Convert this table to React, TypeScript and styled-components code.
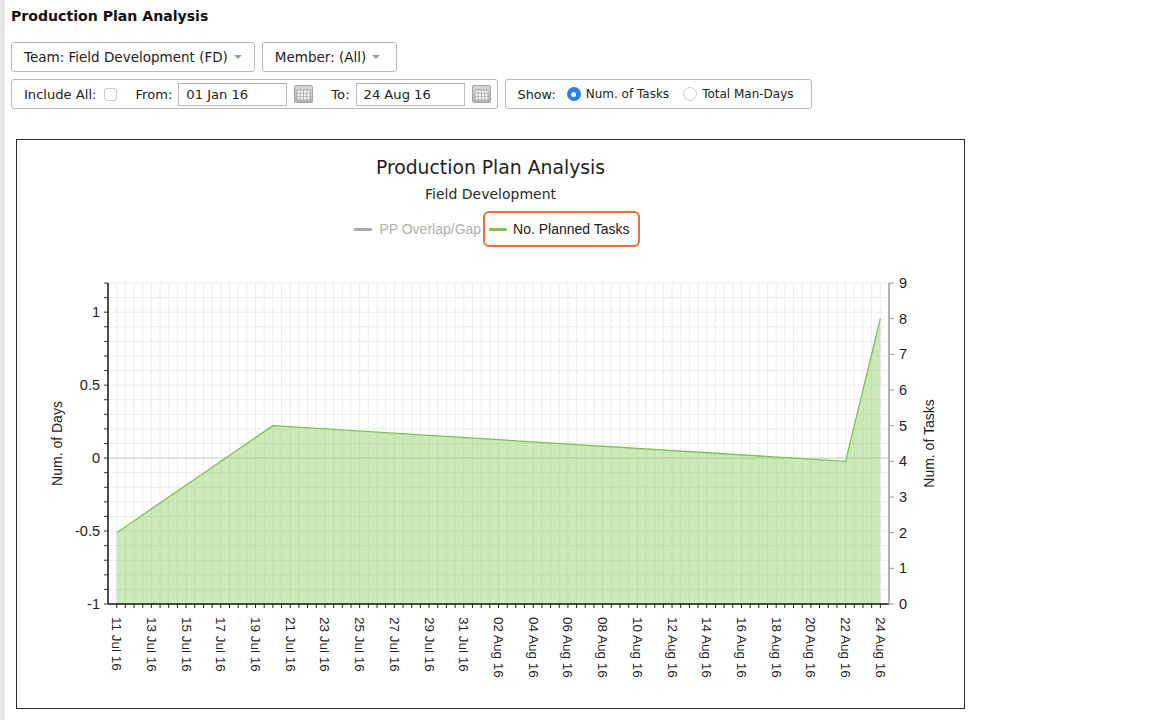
import React from "react";
import styled, { createGlobalStyle, css } from "styled-components";

const GlobalStyle = createGlobalStyle`
  html, body { margin: 0; padding: 0; background: #ffffff; }
  body { font-family: "DejaVu Sans", Verdana, sans-serif; color: #222; }
`;

const Page = styled.div`
  min-height: 720px;
  box-sizing: border-box;
  border-left: 5px solid #e6e6e6;
  padding: 7px 0 0 6px;
  display: flex;
  flex-direction: column;
  align-items: flex-start;
`;

const PageTitle = styled.h1`
  margin: 0;
  font: bold 14.1px/18px "DejaVu Sans", Verdana, sans-serif;
  color: #111;
`;

const Controls = styled.div`
  margin-top: 17px;
  display: flex;
  flex-direction: column;
  gap: 7px;
`;

const Row = styled.div`
  display: flex;
  gap: 7px;
`;

const Box = styled.div<{ $size: number; $padRight: number }>`
  display: flex;
  align-items: center;
  height: 30px;
  box-sizing: border-box;
  border: 1px solid #bababa;
  border-radius: 3px;
  padding: 0 ${(p) => p.$padRight}px 0 12px;
  font-size: ${(p) => p.$size}px;
  color: #222;
  background: #fff;
  white-space: nowrap;
`;

const Caret = styled.span`
  width: 0;
  height: 0;
  margin-left: 6px;
  border-left: 4px solid transparent;
  border-right: 4px solid transparent;
  border-top: 4px solid #9a9a9a;
`;

const FieldLabel = styled.span<{ $gap?: number }>`
  margin-left: ${(p) => p.$gap ?? 0}px;
`;

const Checkbox = styled.span`
  margin-left: 8px;
  width: 13px;
  height: 13px;
  box-sizing: border-box;
  border: 1px solid #c8c8c8;
  border-radius: 3px;
  background: #fff;
`;

const DateInput = styled.div`
  margin-left: 6px;
  width: 109px;
  height: 23px;
  box-sizing: border-box;
  border: 1px solid #bdbdbd;
  border-top-color: #a9a9a9;
  padding-left: 7px;
  display: flex;
  align-items: center;
  background: #fff;
  font-size: 13.1px;
`;

const CalendarButton = styled.span`
  margin-left: 7px;
  display: flex;
  width: 19px;
  height: 18px;
`;

const Radio = styled.span<{ $checked?: boolean; $gap: number }>`
  margin-left: ${(p) => p.$gap}px;
  width: 14px;
  height: 14px;
  box-sizing: border-box;
  border-radius: 50%;
  display: flex;
  align-items: center;
  justify-content: center;
  ${(p) =>
    p.$checked
      ? css`
          background: #2b7ff4;
          &::after {
            content: "";
            width: 5px;
            height: 5px;
            border-radius: 50%;
            background: #fff;
          }
        `
      : css`
          background: #fff;
          border: 1px solid #cbcbcb;
        `}
`;

const RadioLabel = styled.span`
  margin-left: 5px;
  font-size: 12px;
`;

const ChartFrame = styled.div`
  margin: 30px 0 0 5px;
  width: 949px;
  height: 570px;
  box-sizing: border-box;
  border: 1px solid #2b2b2b;
  display: flex;
  flex-direction: column;
  background: #fff;
`;

const ChartHeader = styled.div`
  height: 120px;
  box-sizing: border-box;
  padding-top: 16px;
  display: flex;
  flex-direction: column;
  align-items: center;
`;

const ChartTitle = styled.div`
  font: 18.8px/24px "DejaVu Sans", Verdana, sans-serif;
  color: #1e1e1e;
`;

const ChartSubtitle = styled.div`
  margin-top: 4px;
  font: 14px/20px "DejaVu Sans", Verdana, sans-serif;
  color: #2a2a2a;
`;

const Legend = styled.div`
  margin-top: 7px;
  height: 36px;
  display: flex;
  align-items: center;
  gap: 8px;
  padding-left: 3px;
`;

const LegendItem = styled.div<{ $muted?: boolean; $highlight?: boolean }>`
  position: relative;
  display: flex;
  align-items: center;
  gap: ${(p) => (p.$highlight ? 6 : 7)}px;
  font: 14px/16px "Liberation Sans", Arial, sans-serif;
  color: ${(p) => (p.$muted ? "#b0b0b0" : "#1a1a1a")};
  ${(p) =>
    p.$highlight &&
    css`
      &::after {
        content: "";
        position: absolute;
        left: -6px;
        right: -10px;
        top: -10px;
        bottom: -10px;
        border: 2px solid #e8703a;
        border-radius: 6px;
      }
    `}
`;

const Swatch = styled.span<{ $color: string }>`
  width: 18px;
  height: 3px;
  border-radius: 1px;
  background: ${(p) => p.$color};
`;

const Plot = styled.svg`
  display: block;
  font-family: "Liberation Sans", Arial, sans-serif;
  text {
    font-family: "Liberation Sans", Arial, sans-serif;
  }
`;

const CalendarIcon = () => (
  <svg width="19" height="18" viewBox="0 0 19 18">
    <defs>
      <linearGradient id="calg" x1="0" y1="0" x2="0" y2="1">
        <stop offset="0" stopColor="#d9d9d9" />
        <stop offset="1" stopColor="#b5b5b5" />
      </linearGradient>
    </defs>
    <rect x="0.5" y="0.5" width="18" height="17" rx="1.5" fill="url(#calg)" stroke="#a3a3a3" />
    <rect x="3" y="5" width="13" height="10" fill="#f4f4f4" stroke="#9d9d9d" strokeWidth="0.8" />
    <path d="M6.25 5v10M9.5 5v10M12.75 5v10M3 8.33h13M3 11.67h13" stroke="#ababab" strokeWidth="0.8" />
  </svg>
);

const X0 = 91;
const X1 = 872;
const Y0 = 23;
const Y1 = 344;
const PW = X1 - X0;
const PH = Y1 - Y0;
const HALF = PW / 90;
const dayX = (d: number) => X0 + HALF + d * 2 * HALF;
const leftY = (v: number) => Y1 - ((v + 1) / 2.2) * PH;
const rightY = (t: number) => Y1 - (t / 9) * PH;

const dateLabels: { d: number; text: string }[] = [];
for (let d = 0; d <= 44; d += 2) {
  const day = 11 + d;
  const text =
    day <= 31
      ? `${String(day).padStart(2, "0")} Jul 16`
      : `${String(day - 31).padStart(2, "0")} Aug 16`;
  dateLabels.push({ d, text });
}

const series: [number, number][] = [
  [0, 2],
  [9, 5],
  [42, 4],
  [44, 8],
];

const ChartPlot = () => {
  const vGrid = Array.from({ length: 89 }, (_, i) => X0 + (i + 1) * HALF);
  const hGrid = Array.from({ length: 22 }, (_, i) => leftY(-1 + (i + 1) * 0.1));
  const linePts = series.map(([d, t]) => `${dayX(d).toFixed(2)},${rightY(t).toFixed(2)}`).join(" ");
  const areaPts = `${dayX(0).toFixed(2)},${Y1} ${linePts} ${dayX(44).toFixed(2)},${Y1}`;
  const leftLabels = [1, 0.5, 0, -0.5, -1];
  return (
    <Plot width="947" height="448" viewBox="0 0 947 448">
      {vGrid.map((x, i) => (
        <line key={`v${i}`} x1={x} x2={x} y1={Y0} y2={Y1} stroke="#ededed" strokeWidth="1" />
      ))}
      {hGrid.map((y, i) => (
        <line key={`h${i}`} x1={X0} x2={X1} y1={y} y2={y} stroke="#ececec" strokeWidth="1" />
      ))}
      <line x1={X0} x2={X1} y1={leftY(0)} y2={leftY(0)} stroke="#cfcfcf" strokeWidth="1" />
      <polygon points={areaPts} fill="rgba(124, 200, 80, 0.4)" />
      <polyline points={linePts} fill="none" stroke="#7cc44e" strokeWidth="1.3" />

      {/* left axis */}
      <line x1={X0} x2={X0} y1={Y0} y2={Y1} stroke="#111" strokeWidth="1.5" />
      {Array.from({ length: 23 }, (_, i) => leftY(-1 + i * 0.1)).map((y, i) => (
        <line key={`lt${i}`} x1={X0 - 4} x2={X0} y1={y} y2={y} stroke="#333" strokeWidth="1" />
      ))}
      {leftLabels.map((v) => (
        <text key={`ll${v}`} x={X0 - 8} y={leftY(v)} dy="0.35em" textAnchor="end" fontSize="14.5" fill="#222">
          {v}
        </text>
      ))}
      <text
        x={40}
        y={(Y0 + Y1) / 2}
        transform={`rotate(-90 40 ${(Y0 + Y1) / 2})`}
        textAnchor="middle"
        dominantBaseline="central"
        fontSize="14"
        fill="#222"
      >
        Num. of Days
      </text>

      {/* bottom axis */}
      <line x1={X0} x2={X1} y1={Y1} y2={Y1} stroke="#111" strokeWidth="1.5" />
      {Array.from({ length: 89 }, (_, i) => X0 + (i + 1) * HALF).map((x, i) => (
        <line key={`bt${i}`} x1={x} x2={x} y1={Y1} y2={Y1 + 4} stroke="#222" strokeWidth="1" />
      ))}
      {dateLabels.map(({ d, text }) => {
        const x = dayX(d);
        const y = Y1 + 13;
        return (
          <text
            key={`xl${d}`}
            x={x}
            y={y}
            transform={`rotate(90 ${x} ${y})`}
            dominantBaseline="central"
            fontSize="13.5"
            fill="#222"
          >
            {text}
          </text>
        );
      })}

      {/* right axis */}
      <line x1={X1} x2={X1} y1={Y0} y2={Y1} stroke="#9a9a9a" strokeWidth="1.5" />
      {Array.from({ length: 10 }, (_, t) => t).map((t) => (
        <g key={`rt${t}`}>
          <line x1={X1} x2={X1 + 5} y1={rightY(t)} y2={rightY(t)} stroke="#9a9a9a" strokeWidth="1" />
          <text x={X1 + 10} y={rightY(t)} dy="0.35em" fontSize="14.5" fill="#222">
            {t}
          </text>
        </g>
      ))}
      <text
        x={912}
        y={(Y0 + Y1) / 2}
        transform={`rotate(-90 912 ${(Y0 + Y1) / 2})`}
        textAnchor="middle"
        dominantBaseline="central"
        fontSize="14"
        fill="#222"
      >
        Num. of Tasks
      </text>
    </Plot>
  );
};

export default function App() {
  return (
    <>
      <GlobalStyle />
      <Page>
        <PageTitle>Production Plan Analysis</PageTitle>
        <Controls>
          <Row>
            <Box $size={13.5} $padRight={12}>
              <span>Team: Field Development (FD)</span>
              <Caret />
            </Box>
            <Box $size={13.5} $padRight={16}>
              <span>Member: (All)</span>
              <Caret />
            </Box>
          </Row>
          <Row>
            <Box $size={13.1} $padRight={6}>
              <FieldLabel>Include All:</FieldLabel>
              <Checkbox />
              <FieldLabel $gap={18}>From:</FieldLabel>
              <DateInput>01 Jan 16</DateInput>
              <CalendarButton>
                <CalendarIcon />
              </CalendarButton>
              <FieldLabel $gap={18}>To:</FieldLabel>
              <DateInput>24 Aug 16</DateInput>
              <CalendarButton>
                <CalendarIcon />
              </CalendarButton>
            </Box>
            <Box $size={12.8} $padRight={17}>
              <FieldLabel>Show:</FieldLabel>
              <Radio $checked $gap={11} />
              <RadioLabel>Num. of Tasks</RadioLabel>
              <Radio $gap={14} />
              <RadioLabel>Total Man-Days</RadioLabel>
            </Box>
          </Row>
        </Controls>
        <ChartFrame>
          <ChartHeader>
            <ChartTitle>Production Plan Analysis</ChartTitle>
            <ChartSubtitle>Field Development</ChartSubtitle>
            <Legend>
              <LegendItem $muted>
                <Swatch $color="#a9a9a9" />
                <span>PP Overlap/Gap</span>
              </LegendItem>
              <LegendItem $highlight>
                <Swatch $color="#7cc44e" />
                <span>No. Planned Tasks</span>
              </LegendItem>
            </Legend>
          </ChartHeader>
          <ChartPlot />
        </ChartFrame>
      </Page>
    </>
  );
}
